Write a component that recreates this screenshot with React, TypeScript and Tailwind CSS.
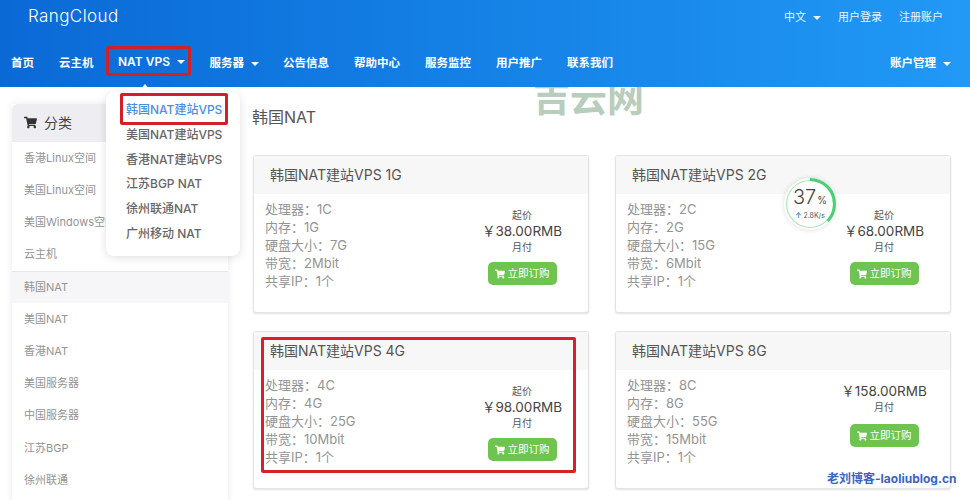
import { FaShoppingCart } from "react-icons/fa";

const font = "font-['Inter','Noto_Sans_CJK_SC',sans-serif]";

const sideItems = [
  "香港Linux空间",
  "美国Linux空间",
  "美国Windows空间",
  "云主机",
  "韩国NAT",
  "美国NAT",
  "香港NAT",
  "美国服务器",
  "中国服务器",
  "江苏BGP",
  "徐州联通",
];

const dropdownItems = ["美国NAT建站VPS", "香港NAT建站VPS", "江苏BGP NAT", "徐州联通NAT", "广州移动 NAT"];

const plans = [
  { name: "韩国NAT建站VPS 1G", cpu: "1C", ram: "1G", disk: "7G", bw: "2Mbit", price: "38.00", from: true },
  { name: "韩国NAT建站VPS 2G", cpu: "2C", ram: "2G", disk: "15G", bw: "6Mbit", price: "68.00", from: true },
  { name: "韩国NAT建站VPS 4G", cpu: "4C", ram: "4G", disk: "25G", bw: "10Mbit", price: "98.00", from: true },
  { name: "韩国NAT建站VPS 8G", cpu: "8C", ram: "8G", disk: "55G", bw: "15Mbit", price: "158.00", from: false },
];

const Caret = () => (
  <span className="ml-[7px] inline-block border-x-[4px] border-t-[4px] border-x-transparent border-t-current align-middle" />
);

const PlanCard = ({ plan }: { plan: (typeof plans)[number] }) => (
  <div className="h-[158px] rounded-[3px] border border-[#e4e4e4] bg-white shadow-[0_1px_2px_rgba(0,0,0,0.12)]">
    <div className="flex h-[38px] items-center bg-[#f7f7f7] pb-[1px] pl-[16px] text-[14px] text-[#555]">{plan.name}</div>
    <div className="flex">
      <div className="w-[202px] pl-[11px] pt-[6px] text-[13px] leading-[18px] text-[#949494]">
        <div>处理器：{plan.cpu}</div>
        <div>内存：{plan.ram}</div>
        <div>硬盘大小：{plan.disk}</div>
        <div>带宽：{plan.bw}</div>
        <div>共享IP：1个</div>
      </div>
      <div className={`flex flex-1 flex-col items-center text-[#555] ${plan.from ? "pt-[14px]" : "pt-[13px]"}`}>
        {plan.from && <div className="h-[15px] text-[10px] leading-[15px]">起价</div>}
        <div className="h-[17px] text-[13.5px] leading-[17px] text-[#444]">￥{plan.price}RMB</div>
        <div className="h-[15px] text-[10px] leading-[15px]">月付</div>
        <button className={`flex h-[23px] w-[69px] items-center justify-center gap-[3px] rounded-[5px] bg-[#6fc451] text-[10.5px] text-white ${plan.from ? "mt-[7px]" : "mt-[9px]"}`}>
          <FaShoppingCart className="text-[10px]" />
          立即订购
        </button>
      </div>
    </div>
  </div>
);

export default function App() {
  return (
    <div className={`relative h-[500px] w-[970px] overflow-hidden bg-white ${font}`}>
      {/* watermark sits behind the header */}
      <div className="absolute left-[533px] top-[77px] text-[37px] font-bold leading-[44px] text-[#b9cdbd]">吉云网</div>

      <header className="relative h-[87px] bg-gradient-to-r from-[#0b69d6] to-[#2199f5] text-white">
        <div className="flex h-[34px] items-center justify-between">
          <div className="pl-[28px] text-[17px] font-light tracking-[0.4px]">RangCloud</div>
          <div className="flex items-center gap-[17px] pr-[27px] text-[11px] text-white/90">
            <span>
              中文
              <Caret />
            </span>
            <span>用户登录</span>
            <span>注册账户</span>
          </div>
        </div>
        <nav className="flex h-[53px] items-start justify-between pr-[19px] pt-[12px] text-[11.5px] font-semibold">
          <div className="flex items-center pl-[11px]">
            <span className="flex h-[36px] items-center">首页</span>
            <span className="ml-[25px] flex h-[36px] items-center">云主机</span>
            <span className="mb-[6px] ml-[12px] flex h-[30px] w-[85px] items-center justify-center rounded-[3px] border-[3px] border-[#d32027] pl-[7px] pt-[1px] text-[12px]">
              NAT VPS
              <Caret />
            </span>
            <span className="ml-[19px] flex h-[36px] items-center">
              服务器
              <Caret />
            </span>
            <span className="ml-[24px] flex h-[36px] items-center">公告信息</span>
            <span className="ml-[25px] flex h-[36px] items-center">帮助中心</span>
            <span className="ml-[25px] flex h-[36px] items-center">服务监控</span>
            <span className="ml-[25px] flex h-[36px] items-center">用户推广</span>
            <span className="ml-[25px] flex h-[36px] items-center">联系我们</span>
          </div>
          <span className="flex h-[36px] items-center">
            账户管理
            <Caret />
          </span>
        </nav>
      </header>

      <div className="flex items-start">
        <aside className="ml-[12px] mt-[17px] w-[216px] shrink-0 shadow-[0_0_8px_rgba(0,0,0,0.08)]">
          <div className="flex h-[38px] items-center gap-[7px] rounded-t-[6px] bg-[#eeeef2] pb-[2px] pl-[12px] text-[14px] text-[#444]">
            <FaShoppingCart className="text-[13px] text-[#333]" />
            分类
          </div>
          <ul className="pb-[20px] text-[11px] text-[#949494]">
            {sideItems.map((item) => (
              <li
                key={item}
                className={`flex h-[32.2px] items-center pl-[12px] ${item === "韩国NAT" ? "border-t border-[#e8e8e8] bg-[#f6f6f8]" : ""}`}
              >
                {item}
              </li>
            ))}
          </ul>
        </aside>

        <main className="ml-[24px] w-[698px] shrink-0 pt-[20px]">
          <h1 className="h-[48px] text-[16px] font-normal leading-[21px] text-[#555]">韩国NAT</h1>
          <div className="ml-[1px] grid grid-cols-[336px_336px] gap-x-[26px] gap-y-[18px]">
            {plans.map((plan) => (
              <PlanCard key={plan.name} plan={plan} />
            ))}
          </div>
        </main>
      </div>

      {/* dropdown menu */}
      <div className="absolute left-[106px] top-[92px] h-[164px] w-[134px] rounded-[8px] bg-white pl-[20px] pt-[6px] text-[12px] font-medium leading-[24.8px] text-[#666] shadow-[0_2px_10px_rgba(0,0,0,0.12)]">
        <div className="text-[#4a90e2]">韩国NAT建站VPS</div>
        {dropdownItems.map((item) => (
          <div key={item}>{item}</div>
        ))}
      </div>
      <div className="absolute left-[138px] top-[84px] border-x-[7px] border-b-[8px] border-x-transparent border-b-white" />

      {/* red annotations */}
      <div className="absolute left-[120px] top-[93px] h-[32px] w-[108px] rounded-[2px] border-[3px] border-[#d32027]" />
      <div className="absolute left-[261px] top-[337px] h-[136px] w-[315px] rounded-[2px] border-[3px] border-[#d92027]" />

      {/* speed ring widget */}
      <div className="absolute left-[784px] top-[178px] flex h-[52px] w-[52px] flex-col items-center justify-center rounded-full bg-white shadow-[0_0_5px_rgba(0,0,0,0.15)]">
        <svg className="absolute inset-0" width="52" height="52" viewBox="0 0 52 52">
          <circle cx="26" cy="26" r="23.5" fill="none" stroke="#a9e8bd" strokeWidth="1.2" />
          <circle
            cx="26"
            cy="26"
            r="24.5"
            fill="none"
            stroke="#4ccf72"
            strokeWidth="3"
            strokeDasharray="57 154"
            transform="rotate(-90 26 26)"
          />
        </svg>
        <div className="mt-[-1px] text-[20px] font-light leading-[21px] text-[#444]">
          37<span className="ml-[1px] text-[10px] font-normal">%</span>
        </div>
        <div className="text-[7px] leading-[9px] text-[#555]">
          <span className="font-bold text-[#2a8fd8]">↑</span> 2.8K/s
        </div>
      </div>

      <div className="absolute left-[827px] top-[471px] text-[12px] font-bold leading-[15px] text-[#3c62c6]">老刘博客-laoliublog.cn</div>
    </div>
  );
}
